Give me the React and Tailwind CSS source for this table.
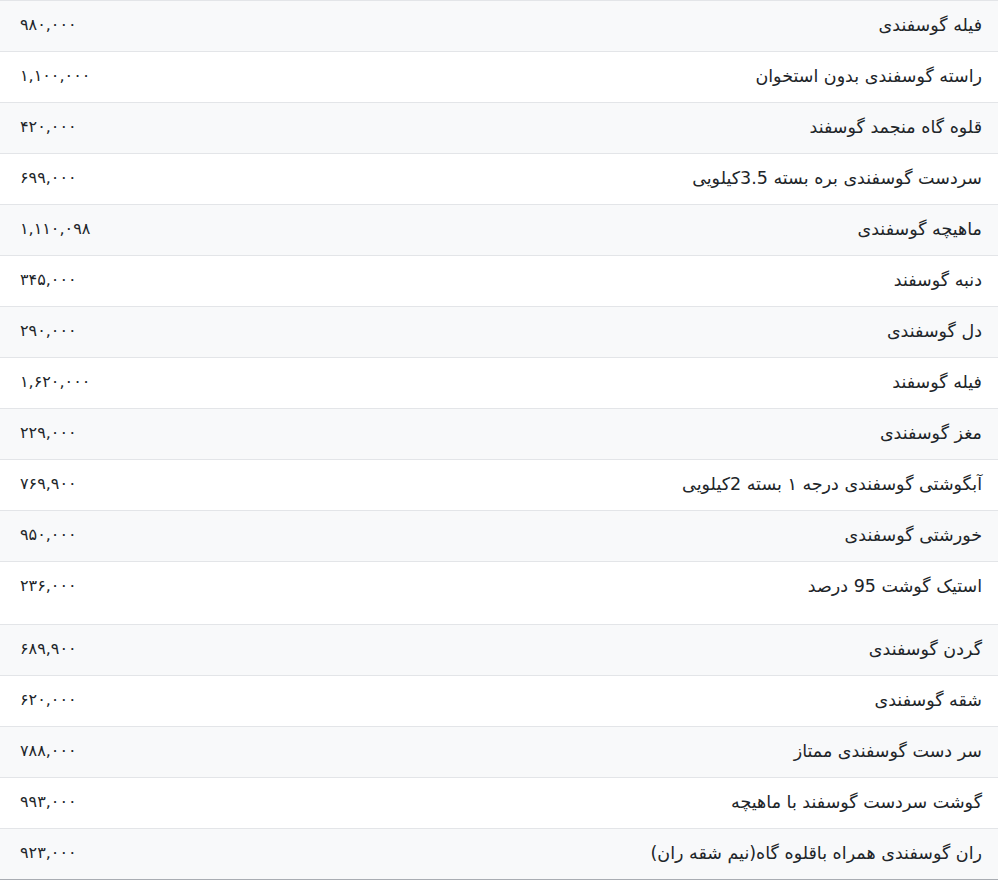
import React from "react";

const rows = [
  { name: "فیله گوسفندی", price: "۹۸۰,۰۰۰" },
  { name: "راسته گوسفندی بدون استخوان", price: "۱,۱۰۰,۰۰۰" },
  { name: "قلوه گاه منجمد گوسفند", price: "۴۲۰,۰۰۰" },
  { name: "سردست گوسفندی بره بسته 3.5کیلویی", price: "۶۹۹,۰۰۰" },
  { name: "ماهیچه گوسفندی", price: "۱,۱۱۰,۰۹۸" },
  { name: "دنبه گوسفند", price: "۳۴۵,۰۰۰" },
  { name: "دل گوسفندی", price: "۲۹۰,۰۰۰" },
  { name: "فیله گوسفند", price: "۱,۶۲۰,۰۰۰" },
  { name: "مغز گوسفندی", price: "۲۲۹,۰۰۰" },
  { name: "آبگوشتی گوسفندی درجه ۱ بسته 2کیلویی", price: "۷۶۹,۹۰۰" },
  { name: "خورشتی گوسفندی", price: "۹۵۰,۰۰۰" },
  { name: "استیک گوشت 95 درصد", price: "۲۳۶,۰۰۰", tall: true },
  { name: "گردن گوسفندی", price: "۶۸۹,۹۰۰" },
  { name: "شقه گوسفندی", price: "۶۲۰,۰۰۰" },
  { name: "سر دست گوسفندی ممتاز", price: "۷۸۸,۰۰۰" },
  { name: "گوشت سردست گوسفند با ماهیچه", price: "۹۹۳,۰۰۰" },
  { name: "ران گوسفندی همراه باقلوه گاه(نیم شقه ران)", price: "۹۲۳,۰۰۰" },
];

const App = () => {
  return (
    <div
      dir="rtl"
      className="w-[998px] bg-white text-[#212529] font-['DejaVu_Sans',sans-serif]"
    >
      <div className="border-b border-[#a9adb3]">
        {rows.map((row, i) => (
          <div
            key={i}
            className={`flex justify-between items-start border-t border-[#e3e5e8] pr-4 pl-5 pt-[12px] ${
              row.tall ? "h-[63px]" : "h-[51px]"
            } ${i % 2 === 0 ? "bg-[#f8f9fa]" : "bg-white"}`}
          >
            <span className="leading-6 text-[17.5px]">{row.name}</span>
            <span className="leading-6 text-[16px]">{row.price}</span>
          </div>
        ))}
      </div>
    </div>
  );
};

export default App;
